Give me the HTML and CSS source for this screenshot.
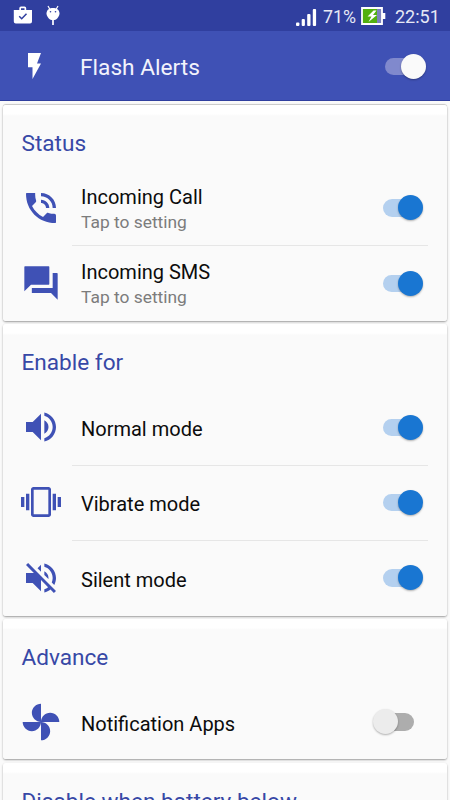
FILE: index.html
```html
<!DOCTYPE html>
<html lang="en">
<head>
<meta charset="utf-8">
<title>Flash Alerts</title>
<link rel="stylesheet" href="styles.css">
</head>
<body>
<div class="statusbar">
  <svg class="store" width="20" height="19" viewBox="0 0 20 19"><path fill="#fff" fill-rule="evenodd" d="M6.300 4V2.200Q6.300.5 8 .5h3.500q1.700 0 1.700 1.700V4H19v11.500q0 2-2 2H2.800q-2 0-2-2V4zM8 4h3.500V2.200H8z"/><path d="M6.200 10.300l2.500 2.500 4.800-5" fill="none" stroke="#303f9f" stroke-width="1.500"/></svg>
  <svg class="robot" width="16" height="22" viewBox="0 0 16 22"><path d="M3 1l2 3.500M13 1l-2 3.500" stroke="#fff" stroke-width="1.200"/><path fill="#fff" d="M1.500 8.500C1.500 1.300 14.500 1.300 14.500 8.500c0 2.500-2.500 6-5 6.500H6.500c-2.500-.5-5-4-5-6.500z"/><path d="M8 15v5" stroke="#fff" stroke-width="1.700"/><circle cx="5.500" cy="6.700" r=".8" fill="#303f9f"/><circle cx="10.500" cy="6.700" r=".8" fill="#303f9f"/></svg>
  <svg class="signal" width="22" height="18" viewBox="0 0 22 18"><g fill="#fff"><rect x="1" y="13.500" width="3.400" height="3.500" rx="1"/><rect x="6.700" y="10" width="3.200" height="7" rx="1"/><rect x="12.200" y="5" width="3.300" height="12" rx="1"/><rect x="17.800" y="0" width="3.300" height="17" rx="1"/></g></svg>
  <span class="percent">71%</span>
  <svg class="battery" width="25" height="18" viewBox="0 0 25 18"><path fill="#7c82bd" d="M1 1h20v16H1z"/><path fill="#52b010" d="M1 1h15v16H1z"/><path d="M1 1h20v16H1z" fill="none" stroke="#fff" stroke-width="1.800"/><path fill="#fff" d="M21 6h3.300v6H21zM12.500 3.500L6.500 9.500h4L7.500 15l8.500-7h-4l3.500-4.500z"/></svg>
  <span class="clock">22:51</span>
</div>
<header class="appbar">
  <svg class="bolt" viewBox="0 0 13 26"><path fill="#fff" d="M0 0h13L9 10.500h4L4.500 26V14.300H0z"/></svg>
  <h1>Flash Alerts</h1>
  <span class="switch light"></span>
</header>
<main>
  <section class="card">
    <h2>Status</h2>
    <div class="row">
      <svg class="icon" viewBox="0 0 24 24"><path d="M20 15.500c-1.250 0-2.450-.2-3.570-.57-.35-.11-.74-.03-1.020.24l-2.200 2.200c-2.830-1.440-5.150-3.750-6.590-6.590l2.200-2.210c.28-.26.360-.65.250-1C8.700 6.450 8.500 5.250 8.500 4V3H3.400q-.4 0-.4.400C3 13.390 10.610 21 20.600 21q.4 0 .4-.4V16.500q0-1-1-1zM19 12h2c0-4.970-4.030-9-9-9v2c3.870 0 7 3.130 7 7zm-4 0h2c0-2.760-2.240-5-5-5v2c1.660 0 3 1.340 3 3z"/></svg>
      <div class="label double"><b>Incoming Call</b><small>Tap to setting</small></div>
      <span class="switch on"></span>
    </div>
    <div class="row">
      <svg class="icon" viewBox="0 0 24 24"><path d="M21.600 6H19v9H6.500v3H18l4 4V6.400q0-.4-.4-.4zM17 12.600V2.400q0-.4-.4-.4H2.400q-.4 0-.4.400V17l4-4h10.600q.4 0 .4-.4z"/></svg>
      <div class="label double"><b>Incoming SMS</b><small>Tap to setting</small></div>
      <span class="switch on"></span>
    </div>
  </section>
  <section class="card">
    <h2>Enable for</h2>
    <div class="row">
      <svg class="icon" viewBox="0 0 24 24"><path d="M3 9v6h4l5 5V4L7 9H3zm13.500 3c0-1.770-1.020-3.290-2.500-4.030v8.050c1.480-.73 2.500-2.250 2.500-4.020zM14 3.230v2.060c2.890.86 5 3.540 5 6.710s-2.110 5.850-5 6.710v2.060c4.010-.91 7-4.490 7-8.770s-2.990-7.860-7-8.770z"/></svg>
      <div class="label"><b>Normal mode</b></div>
      <span class="switch on"></span>
    </div>
    <div class="row">
      <svg class="icon" viewBox="0 0 24 24"><path d="M0 15h2V9H0v6zm3 2h2V7H3v10zm19-8v6h2V9h-2zm-3 8h2V7h-2v10zM16.500 3h-9C6.670 3 6 3.670 6 4.500v15c0 .83.670 1.500 1.500 1.500h9c.83 0 1.500-.67 1.500-1.500v-15c0-.83-.67-1.500-1.500-1.500zM16.400 19.400H7.600V4.600h8.800v14.800z"/></svg>
      <div class="label"><b>Vibrate mode</b></div>
      <span class="switch on"></span>
    </div>
    <div class="row">
      <svg class="icon" viewBox="0 0 24 24"><path d="M16.500 12c0-1.770-1.020-3.290-2.500-4.030v2.210l2.450 2.450c.03-.2.050-.41.050-.63zm2.500 0c0 .94-.2 1.820-.54 2.640l1.510 1.510C20.630 14.910 21 13.500 21 12c0-4.280-2.990-7.860-7-8.770v2.060c2.890.86 5 3.540 5 6.710zM4.270 3L3 4.270 7.730 9H3v6h4l5 5v-6.730l4.250 4.250c-.67.52-1.420.93-2.250 1.180v2.060c1.380-.31 2.630-.95 3.690-1.810L19.730 21 21 19.730l-9-9L4.270 3zM12 4L9.910 6.090 12 8.180V4z"/></svg>
      <div class="label"><b>Silent mode</b></div>
      <span class="switch on"></span>
    </div>
  </section>
  <section class="card">
    <h2>Advance</h2>
    <div class="row">
      <svg class="icon" viewBox="0 0 24 24"><path d="M12 12c0-3 2.500-5.500 5.500-5.500S23 9 23 12H12zm0 0c0 3-2.500 5.500-5.500 5.500S1 15 1 12h11zm0 0c-3 0-5.500-2.500-5.500-5.500S9 1 12 1v11zm0 0c3 0 5.500 2.500 5.500 5.500S15 23 12 23V12z"/></svg>
      <div class="label"><b>Notification Apps</b></div>
      <span class="switch off"></span>
    </div>
  </section>
  <section class="card">
    <h2>Disable when battery below</h2>
  </section>
</main>
</body>
</html>
```
FILE: styles.css
```css
* { box-sizing: border-box; }
html, body { height: 100%; }
body {
  margin: 0;
  width: 450px;
  height: 800px;
  overflow: hidden;
  background: #fafafa;
  font-family: Roboto, "Liberation Sans", sans-serif;
  white-space: nowrap;
}
h1, h2 { margin: 0; font-weight: 400; }
svg { display: block; flex: none; }

.statusbar {
  display: flex;
  align-items: flex-start;
  height: 31px;
  padding: 0 11px 0 12.5px;
  background: #303f9f;
  color: #e6e8f5;
  font-size: 18px;
  line-height: 22px;
}
.store { margin-top: 5.5px; }
.robot { margin: 5px 0 0 12px; }
.signal { margin: 9px 6px 0 auto; }
.percent { width: 33px; margin-top: 6px; font-size: 17.8px; }
.battery { margin: 7px 0 0 5px; }
.clock { width: 44px; margin: 6px 0 0 9px; }

.appbar {
  display: flex;
  align-items: center;
  height: 70px;
  padding: 1px 24.5px 0 28px;
  background: #3f51b5;
  border-bottom: 1px solid #303f9f;
}
.bolt { width: 13px; height: 26px; }
.appbar h1 {
  flex: 1;
  margin-left: 39px;
  padding-top: 4px;
  color: #f2f3fc;
  font-size: 22.7px;
  line-height: 30px;
}

main { display: flex; flex-direction: column; gap: 3.5px; padding: 4px 3px 0; }
.card {
  flex: none;
  padding: 0 19px;
  border-radius: 3px;
  background: linear-gradient(#fff 9px, #fafafa 11px);
  box-shadow: 0 1px 2px rgba(0, 0, 0, .38);
}
.card:first-child { box-shadow: 0 1px 2px rgba(0, 0, 0, .38), 0 -1px 1px rgba(0, 0, 0, .18); }
.card h2 {
  height: 65.3px;
  margin-left: -.5px;
  padding-top: 23.8px;
  color: #3748a6;
  font-size: 22.6px;
  line-height: 30px;
}
.row { display: flex; align-items: center; height: 75px; }
.row + .row {
  height: 75.5px;
  background: linear-gradient(#e6e6e6, #e6e6e6) 50px 0 / 356px 1px no-repeat;
}
.icon { width: 40px; height: 40px; margin-left: -1px; fill: #3f51b5; }
.label { flex: 1; margin-left: 20px; padding-top: 4px; }
.label.double { padding-top: 2px; }
.label b {
  display: block;
  color: #0c0c0c;
  font-size: 20px;
  font-weight: 400;
  line-height: 26px;
}
.label small {
  display: block;
  color: #7c7c7c;
  font-size: 17.4px;
  line-height: 24px;
}

.switch {
  position: relative;
  flex: none;
  width: 40.5px;
  height: 25px;
  margin-right: 5px;
}
.switch::before, .switch::after { content: ""; position: absolute; }
.switch::before {
  left: 0;
  top: 4px;
  width: 31px;
  height: 17.5px;
  border-radius: 9px;
  background: #b4d0ef;
}
.switch::after {
  right: 0;
  top: 0;
  width: 25px;
  height: 25px;
  border-radius: 50%;
  background: #1976d2;
  box-shadow: 0 1px 2px rgba(0, 0, 0, .3);
}
.switch.light { margin: 0; }
.light::before { background: #8089cd; }
.light::after { background: #fafafa; }
.off::before { background: #adadad; }
.off::after { right: 25px; background: #ececec; }
```
